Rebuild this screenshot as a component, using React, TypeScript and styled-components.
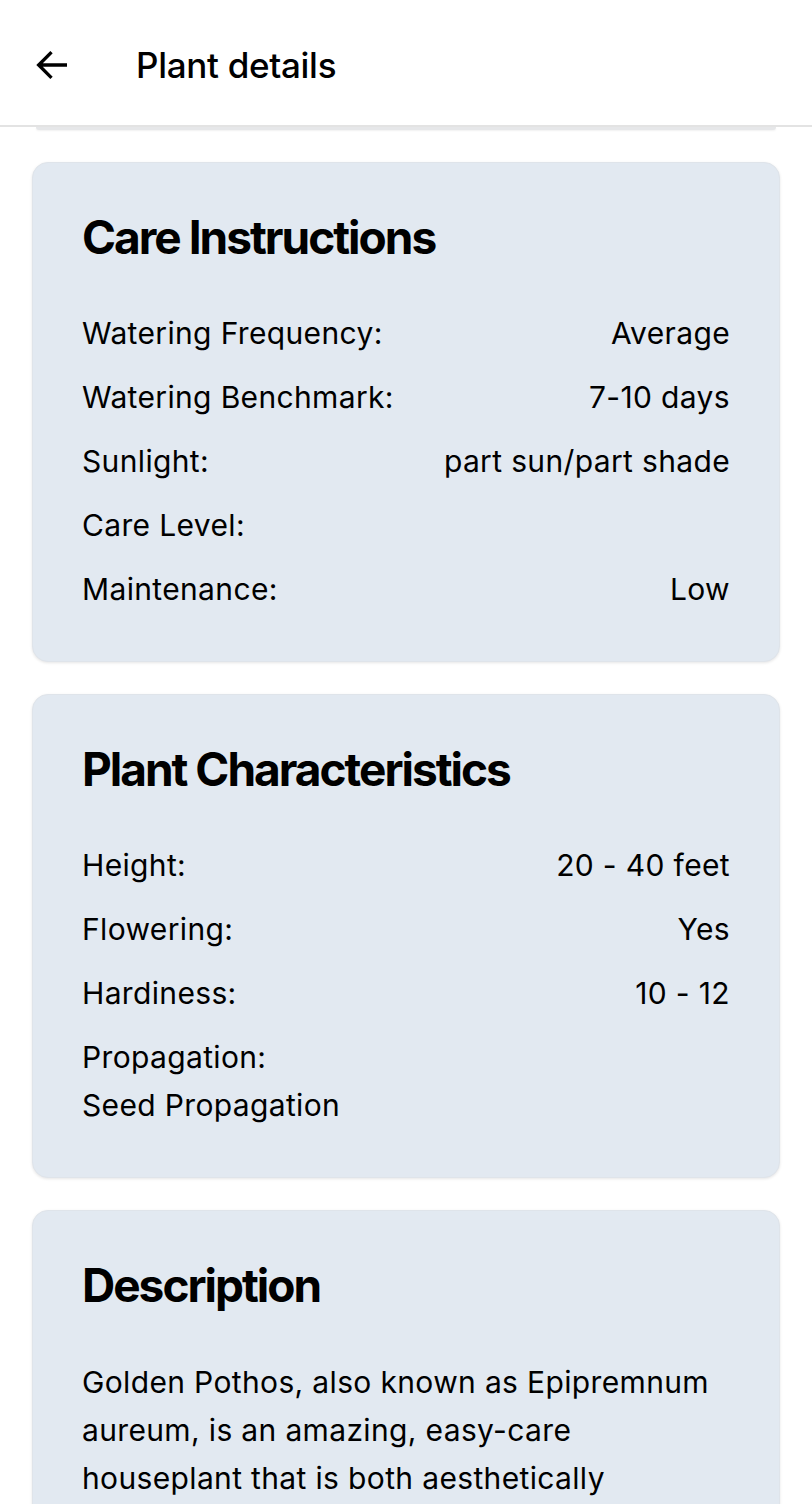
import React from "react";
import styled, { createGlobalStyle } from "styled-components";

const GlobalStyle = createGlobalStyle`
  html, body {
    margin: 0;
    padding: 0;
    background: #ffffff;
  }
  body {
    font-family: Inter, "Noto Sans", "Liberation Sans", sans-serif;
    color: #000000;
  }
  * { box-sizing: border-box; }
`;

const Page = styled.div`
  width: 812px;
  height: 1504px;
  overflow: hidden;
  display: flex;
  flex-direction: column;
  background: #ffffff;
`;

const Header = styled.header`
  flex: 0 0 auto;
  height: 127px;
  display: flex;
  align-items: center;
  padding: 4px 0 0 32px;
  gap: 64px;
  background: #ffffff;
  border-bottom: 2px solid #e3e3e3;
  position: relative;
  z-index: 2;
`;

const BackButton = styled.button`
  width: 40px;
  height: 40px;
  padding: 0;
  border: none;
  background: transparent;
  display: flex;
  align-items: center;
  justify-content: center;
  cursor: pointer;
`;

const Title = styled.h1`
  margin: 0;
  font-size: 35px;
  font-weight: 500;
  letter-spacing: -0.3px;
  line-height: 1.2;
`;

const Content = styled.main`
  display: flex;
  flex-direction: column;
  gap: 32px;
  padding: 0 32px;
`;

const CardTail = styled.div`
  height: 3px;
  margin: 0 4px;
  border-radius: 0 0 16px 16px;
  background: #e6e7e9;
  box-shadow: 0 1px 2px rgba(0, 0, 0, 0.06);
`;

const Card = styled.section`
  background: #e2e9f1;
  border: 1px solid #dfe4ea;
  border-radius: 16px;
  box-shadow: 0 1px 3px rgba(0, 0, 0, 0.1);
  padding: 48px 49px;
`;

const CardTitle = styled.h2`
  margin: -1px 0 44px;
  font-size: 46px;
  font-weight: 700;
  letter-spacing: -2px;
  line-height: 1.2;
`;

const Rows = styled.div`
  display: flex;
  flex-direction: column;
  gap: 16px;
`;

const Row = styled.div<{ $stacked?: boolean }>`
  display: flex;
  flex-direction: ${(p) => (p.$stacked ? "column" : "row")};
  justify-content: space-between;
  font-size: 30px;
  letter-spacing: 0.35px;
  line-height: 48px;
`;

const Label = styled.span``;

const Value = styled.span<{ $stacked?: boolean }>`
  text-align: ${(p) => (p.$stacked ? "left" : "right")};
`;

const Paragraph = styled.p`
  margin: 0;
  font-size: 30px;
  letter-spacing: 0.35px;
  line-height: 48px;
`;

const ArrowBack = () => (
  <svg width="40" height="40" viewBox="0 0 24 24" fill="none">
    <path
      d="M20 12H4.5M11 5l-7 7 7 7"
      stroke="#000"
      strokeWidth="2"
      strokeLinecap="square"
      strokeLinejoin="miter"
    />
  </svg>
);

type Item = { label: string; value: string; stacked?: boolean };

const care: Item[] = [
  { label: "Watering Frequency:", value: "Average" },
  { label: "Watering Benchmark:", value: "7-10 days" },
  { label: "Sunlight:", value: "part sun/part shade" },
  { label: "Care Level:", value: "" },
  { label: "Maintenance:", value: "Low" },
];

const characteristics: Item[] = [
  { label: "Height:", value: "20 - 40 feet" },
  { label: "Flowering:", value: "Yes" },
  { label: "Hardiness:", value: "10 - 12" },
  { label: "Propagation:", value: "Seed Propagation", stacked: true },
];

const InfoCard = ({ title, items }: { title: string; items: Item[] }) => (
  <Card>
    <CardTitle>{title}</CardTitle>
    <Rows>
      {items.map((it) => (
        <Row key={it.label} $stacked={it.stacked}>
          <Label>{it.label}</Label>
          <Value $stacked={it.stacked}>{it.value}</Value>
        </Row>
      ))}
    </Rows>
  </Card>
);

export default function App() {
  return (
    <>
      <GlobalStyle />
      <Page>
        <Header>
          <BackButton aria-label="Back">
            <ArrowBack />
          </BackButton>
          <Title>Plant details</Title>
        </Header>
        <Content>
          <CardTail />
          <InfoCard title="Care Instructions" items={care} />
          <InfoCard title="Plant Characteristics" items={characteristics} />
          <Card>
            <CardTitle>Description</CardTitle>
            <Paragraph>
              Golden Pothos, also known as Epipremnum aureum, is an amazing,
              easy-care houseplant that is both aesthetically pleasing and
              beneficial for indoor air quality. Its heart-shaped leaves come
              in shades of green and gold, and it grows quickly when given
              bright, indirect light.
            </Paragraph>
          </Card>
        </Content>
      </Page>
    </>
  );
}
